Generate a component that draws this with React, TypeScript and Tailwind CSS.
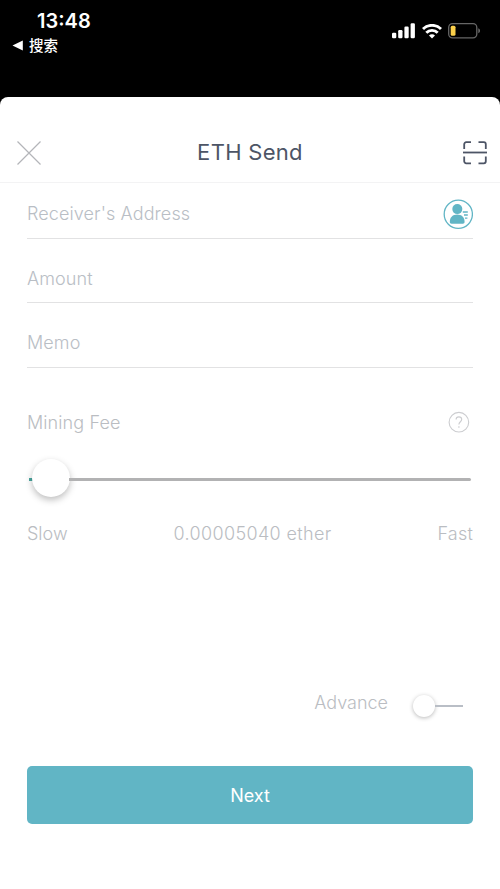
import { useState } from 'react';
import type { ReactNode } from 'react';

const SignalIcon = () => (
  <svg width="24" height="16" viewBox="0 0 24 16" fill="#fff">
    <rect x="0" y="9.8" width="4.3" height="5.5" rx="1.2" />
    <rect x="6.2" y="7" width="4.3" height="8.3" rx="1.2" />
    <rect x="12.4" y="3.6" width="4.3" height="11.7" rx="1.2" />
    <rect x="18.6" y="0.2" width="4.3" height="15.1" rx="1.2" />
  </svg>
);

const WifiIcon = () => (
  <svg width="20" height="15" viewBox="0 0 20 15" fill="none" stroke="#fff" strokeWidth="2.9">
    <path d="M1 5a12.9 12.9 0 0 1 18 0" />
    <path d="M4.3 8.8a8 8 0 0 1 11.4 0" />
    <path d="M10 14.6 7 11.6a4.2 4.2 0 0 1 6 0Z" fill="#fff" stroke="none" />
  </svg>
);

const BatteryIcon = () => (
  <svg width="33" height="16" viewBox="0 0 33 16" fill="none">
    <rect x="0.7" y="0.7" width="28.1" height="14.2" rx="3.8" stroke="#666" strokeWidth="1.3" />
    <rect x="2.7" y="2.8" width="4.8" height="10" rx="1.5" fill="#fbd04b" />
    <path d="M30.4 5.3c2 .8 2 4.2 0 5Z" fill="#777" />
  </svg>
);

const CloseIcon = () => (
  <svg width="24" height="24" viewBox="0 0 24 24" fill="none" stroke="#b3b5b9" strokeWidth="1.2">
    <path d="M0.5 0.5l23 23M23.5 0.5l-23 23" />
  </svg>
);

const ScanIcon = () => (
  <svg width="24" height="24" viewBox="0 0 24 24" fill="none" stroke="#4d5566" strokeWidth="1.8">
    <path d="M1.2 8V3.2a2 2 0 0 1 2-2H8M15.5 1.2h5.3a2 2 0 0 1 2 2V8M22.8 15.5v4.8a2 2 0 0 1-2 2h-5.3M8 22.3H3.2a2 2 0 0 1-2-2v-4.8" />
    <path d="M0 11.5h24" />
  </svg>
);

const ContactIcon = () => (
  <svg width="30" height="30" viewBox="0 0 30 30" fill="none">
    <circle cx="15.3" cy="15.2" r="14.1" stroke="#61b5c5" strokeWidth="1.3" />
    <circle cx="14.3" cy="10.1" r="5" fill="#61b5c5" />
    <path d="M6.8 22.8c0-4.5 3-7.3 7.4-7.3s7.4 2.8 7.4 7.3c0 1.3-.6 2-1.8 2H8.6c-1.2 0-1.8-.7-1.8-2Z" fill="#61b5c5" />
    <path d="M19.8 13h5M21 16h3.8M22 19.2h2.4" stroke="#61b5c5" strokeWidth="1.3" />
  </svg>
);

const HelpIcon = () => (
  <svg width="22" height="22" viewBox="0 0 22 22" fill="none" stroke="#cccdd0">
    <circle cx="10.9" cy="11.2" r="9.8" strokeWidth="1.1" />
    <path d="M8.1 8.6c0-1.8 1.2-2.7 2.8-2.7s2.8 1 2.8 2.6c0 2.1-2.8 2.5-2.8 5" strokeWidth="1.1" />
    <circle cx="10.9" cy="16" r="0.8" fill="#c8c9cc" stroke="none" />
  </svg>
);

const StatusBar = () => (
  <div className="flex h-[97px] shrink-0 items-start justify-between pr-[19px] text-white">
    <div className="pt-[9px]">
      <div className="pl-[37px] text-[20px] leading-6 font-semibold">13:48</div>
      <div className="flex items-center gap-1.5 pt-0.5 pl-3">
        <svg width="11" height="11" viewBox="0 0 11 11" fill="#fff">
          <path d="M0.5 5.5 10.8 0.5v10Z" />
        </svg>
        <span className="font-['Noto_Sans_CJK_SC',sans-serif] text-[14.5px] leading-5 font-medium">搜索</span>
      </div>
    </div>
    <div className="flex items-center gap-[6px] pt-[23px]">
      <SignalIcon />
      <WifiIcon />
      <BatteryIcon />
    </div>
  </div>
);

// Single line input with optional action on the right
const Field = ({ label, className, children }: { label: string; className: string; children?: ReactNode }) => (
  <div className={`flex items-center border-b border-[#e2e2e3] ${className}`}>
    <input
      aria-label={label}
      placeholder={label}
      className="min-w-0 flex-1 bg-transparent tracking-[0.1px] outline-none placeholder:text-[#b9bec5]"
    />
    {children}
  </div>
);

export default function App() {
  const [advanced, setAdvanced] = useState(false);

  return (
    <main className="flex h-[889px] w-full flex-col overflow-hidden bg-black font-[Inter,sans-serif] text-[18px] font-light text-[#babdc2]">
      <StatusBar />

      <div className="flex flex-1 flex-col rounded-t-[8px] bg-white">
        <header className="flex h-[86px] items-center justify-between border-b border-[#f3f3f4] pt-[26px] pr-[13px] pl-[17px]">
          <button aria-label="Close"><CloseIcon /></button>
          <h1 className="mr-[4px] text-[22px] font-normal tracking-[0.3px] text-[#4d5566]">ETH Send</h1>
          <button aria-label="Scan"><ScanIcon /></button>
        </header>

        <div className="flex flex-1 flex-col px-[27px]">
          <Field label="Receiver's Address" className="h-[56px] pt-[6px]">
            <button aria-label="Contacts"><ContactIcon /></button>
          </Field>
          <Field label="Amount" className="h-16 pt-[15px]" />
          <Field label="Memo" className="h-[65px] pt-[15px]" />

          <div className="mt-[39px] flex h-[30px] items-center justify-between pr-[3px] tracking-[0.1px]">
            <span>Mining Fee</span>
            <button aria-label="Help"><HelpIcon /></button>
          </div>

          <div className="mt-[22px] mr-[2px] ml-[2px] flex h-[38px] items-center">
            <div className="mt-0.5 h-[3px] w-[4px] bg-[#4aa69f]" />
            <div className="-mx-px size-[38px] shrink-0 rounded-full bg-white shadow-[0_3px_7px_rgba(0,0,0,0.26)]" />
            <div className="mt-0.5 h-[3px] flex-1 rounded-r-full bg-[#b2b2b3]" />
          </div>

          <div className="mt-[21px] flex h-[30px] items-center justify-between">
            <span>Slow</span>
            <span className="tracking-[0.35px]">0.00005040 ether</span>
            <span className="tracking-[0.2px]">Fast</span>
          </div>

          <div className="mt-[139px] flex h-[30px] items-center justify-end pr-[10px]">
            <span>Advance</span>
            <button
              role="switch"
              aria-label="Advance"
              aria-checked={advanced}
              onClick={() => setAdvanced(!advanced)}
              className={`mt-[7px] ml-[25px] flex w-[50px] items-center ${advanced ? 'flex-row-reverse' : ''}`}
            >
              <span className="size-[22px] rounded-full bg-white shadow-[0_1px_4px_rgba(0,0,0,0.28)]" />
              <span className="h-[2px] flex-1 bg-[#b9bec6]" />
            </button>
          </div>

          <button className="mt-[49px] h-[58px] rounded-[5px] bg-[#61b5c5] font-normal text-white">Next</button>
        </div>
      </div>
    </main>
  );
}
